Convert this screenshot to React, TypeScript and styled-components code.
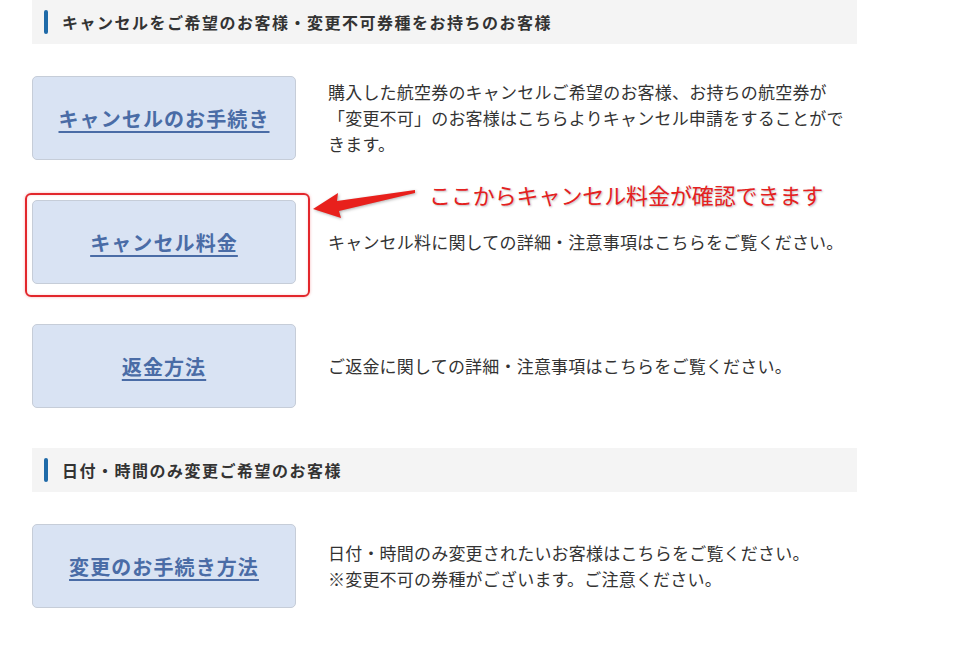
import React from "react";
import styled, { createGlobalStyle } from "styled-components";

const Global = createGlobalStyle`
  html, body { margin: 0; padding: 0; background: #ffffff; }
  body { font-family: "Noto Sans CJK JP", "Noto Sans", sans-serif; color: #333333; }
`;

const Page = styled.div`
  width: 825px;
  padding-left: 32px;
  position: relative;
`;

const SectionHeader = styled.h2`
  margin: 0;
  height: 44px;
  background: #f4f4f4;
  display: flex;
  align-items: center;
  gap: 14px;
  padding-left: 12px;
  font-size: 16px;
  font-weight: 700;
  letter-spacing: 1.5px;
  color: #333333;
  &::before {
    content: "";
    width: 4px;
    height: 24px;
    border-radius: 2px;
    background: #1f6aa8;
  }
`;

const Rows = styled.div`
  display: flex;
  flex-direction: column;
  gap: 40px;
  padding: 32px 0 40px;
`;

const Row = styled.div`
  display: flex;
  align-items: center;
  gap: 32px;
  position: relative;
`;

const ButtonWrap = styled.div`
  position: relative;
  flex: none;
`;

const LinkButton = styled.a`
  box-sizing: border-box;
  width: 264px;
  height: 84px;
  display: flex;
  align-items: center;
  justify-content: center;
  background: #d9e3f3;
  border: 1px solid #c6cdd8;
  border-radius: 5px;
  color: #4a6ca6;
  font-size: 20px;
  font-weight: 700;
  letter-spacing: 1.1px;
  text-decoration: underline;
  text-underline-offset: 4px;
  text-decoration-thickness: 2px;
`;

const Highlight = styled.div`
  position: absolute;
  left: -7px;
  top: -7px;
  width: 285px;
  height: 104px;
  box-sizing: border-box;
  border: 2px solid #e2262b;
  border-radius: 6px;
  box-shadow: 0 0 3px rgba(226, 38, 43, 0.35), inset 0 0 3px rgba(226, 38, 43, 0.2);
  pointer-events: none;
`;

const Description = styled.p`
  margin: 0;
  width: 525px;
  font-size: 17px;
  letter-spacing: 0.2px;
  line-height: 26px;
  color: #333333;
`;

const Annotation = styled.div`
  position: absolute;
  left: 279px;
  top: -22px;
  display: flex;
  align-items: flex-start;
  gap: 8px;
  pointer-events: none;
`;

const AnnotationText = styled.span`
  font-size: 22px;
  line-height: 33px;
  letter-spacing: -0.1px;
  color: #e4211f;
  text-shadow: 1px 1px 2px rgba(0, 0, 0, 0.25);
  white-space: nowrap;
`;

const ArrowSvg = styled.svg`
  display: block;
  margin-top: 10px;
  filter: drop-shadow(1px 1px 1.5px rgba(0, 0, 0, 0.3));
`;

type Item = { label: string; text: string[]; highlight?: boolean };

const section1: Item[] = [
  {
    label: "キャンセルのお手続き",
    text: [
      "購入した航空券のキャンセルご希望のお客様、お持ちの航空券が「変更不可」のお客様はこちらよりキャンセル申請をすることができます。",
    ],
  },
  {
    label: "キャンセル料金",
    text: ["キャンセル料に関しての詳細・注意事項はこちらをご覧ください。"],
    highlight: true,
  },
  {
    label: "返金方法",
    text: ["ご返金に関しての詳細・注意事項はこちらをご覧ください。"],
  },
];

const section2: Item[] = [
  {
    label: "変更のお手続き方法",
    text: [
      "日付・時間のみ変更されたいお客様はこちらをご覧ください。",
      "※変更不可の券種がございます。ご注意ください。",
    ],
  },
];

function Arrow() {
  return (
    <ArrowSvg width="110" height="36" viewBox="0 0 110 36">
      <polygon
        points="2,21 27,5 26,13 104,2 104,5 28,23 30,30"
        fill="#e8201c"
      />
    </ArrowSvg>
  );
}

function ItemRow({ item }: { item: Item }) {
  return (
    <Row>
      <ButtonWrap>
        <LinkButton href="#">{item.label}</LinkButton>
        {item.highlight && <Highlight />}
      </ButtonWrap>
      <Description>
        {item.text.map((t, i) => (
          <React.Fragment key={i}>
            {i > 0 && <br />}
            {t}
          </React.Fragment>
        ))}
      </Description>
      {item.highlight && (
        <Annotation>
          <Arrow />
          <AnnotationText>ここからキャンセル料金が確認できます</AnnotationText>
        </Annotation>
      )}
    </Row>
  );
}

export default function App() {
  return (
    <>
      <Global />
      <Page>
        <SectionHeader>キャンセルをご希望のお客様・変更不可券種をお持ちのお客様</SectionHeader>
        <Rows>
          {section1.map((it) => (
            <ItemRow key={it.label} item={it} />
          ))}
        </Rows>
        <SectionHeader>日付・時間のみ変更ご希望のお客様</SectionHeader>
        <Rows>
          {section2.map((it) => (
            <ItemRow key={it.label} item={it} />
          ))}
        </Rows>
      </Page>
    </>
  );
}
